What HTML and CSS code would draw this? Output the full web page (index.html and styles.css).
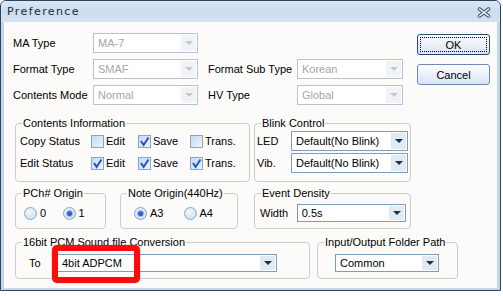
FILE: index.html
```html
<!DOCTYPE html>
<html lang="en">
<head>
<meta charset="UTF-8" />
<title>Preference</title>
<link rel="stylesheet" href="styles.css">
</head>
<body>

<div class="window">
  <div class="titlebar">
    <span class="title">Preference</span>
    <svg class="close" width="14" height="11" viewBox="0 0 14 11">
      <path d="M2.5 2 L11.5 9 M11.5 2 L2.5 9" stroke="#4f6276" stroke-width="3.6" stroke-linecap="round"/>
      <path d="M2.5 2 L11.5 9 M11.5 2 L2.5 9" stroke="#f1f5f9" stroke-width="1.5" stroke-linecap="round"/>
    </svg>
  </div>

  <div class="client">
    <div class="top">
      <div class="fields">
        <span class="lbl c1">MA Type</span>
        <div class="combo off"><span>MA-7</span><i class="arrow"></i></div>

        <span class="lbl c1">Format Type</span>
        <div class="combo off"><span>SMAF</span><i class="arrow"></i></div>
        <span class="lbl l2">Format Sub Type</span>
        <div class="combo off"><span>Korean</span><i class="arrow"></i></div>

        <span class="lbl c1">Contents Mode</span>
        <div class="combo off"><span>Normal</span><i class="arrow"></i></div>
        <span class="lbl l2">HV Type</span>
        <div class="combo off"><span>Global</span><i class="arrow"></i></div>
      </div>
      <div class="buttons">
        <button class="btn default"><span class="face">OK</span></button>
        <button class="btn"><span class="face">Cancel</span></button>
      </div>
    </div>

    <div class="row r2">
      <fieldset class="group g-contents">
        <legend>Contents Information</legend>
        <div class="checks">
          <span>Copy Status</span>
          <label class="chk"><i class="cb"></i>Edit</label>
          <label class="chk"><i class="cb"><svg viewBox="0 0 11 11"><path d="M2 5 L4.6 9 L9.5 1.5"/></svg></i>Save</label>
          <label class="chk"><i class="cb"></i>Trans.</label>

          <span>Edit Status</span>
          <label class="chk"><i class="cb"><svg viewBox="0 0 11 11"><path d="M2 5 L4.6 9 L9.5 1.5"/></svg></i>Edit</label>
          <label class="chk"><i class="cb"><svg viewBox="0 0 11 11"><path d="M2 5 L4.6 9 L9.5 1.5"/></svg></i>Save</label>
          <label class="chk"><i class="cb"><svg viewBox="0 0 11 11"><path d="M2 5 L4.6 9 L9.5 1.5"/></svg></i>Trans.</label>
        </div>
      </fieldset>

      <fieldset class="group g-blink">
        <legend>Blink Control</legend>
        <div class="pairs">
          <span>LED</span>
          <div class="combo"><span>Default(No Blink)</span><i class="arrow"></i></div>
          <span>Vib.</span>
          <div class="combo"><span>Default(No Blink)</span><i class="arrow"></i></div>
        </div>
      </fieldset>
    </div>

    <div class="row r3">
      <fieldset class="group g-pch">
        <legend>PCh# Origin</legend>
        <div class="radios">
          <label class="opt"><i class="rb"></i>0</label>
          <label class="opt"><i class="rb on"></i>1</label>
        </div>
      </fieldset>

      <fieldset class="group g-note">
        <legend>Note Origin(440Hz)</legend>
        <div class="radios">
          <label class="opt"><i class="rb on"></i>A3</label>
          <label class="opt"><i class="rb"></i>A4</label>
        </div>
      </fieldset>

      <fieldset class="group g-event">
        <legend>Event Density</legend>
        <div class="line">
          <span class="tag">Width</span>
          <div class="combo"><span>0.5s</span><i class="arrow"></i></div>
        </div>
      </fieldset>
    </div>

    <div class="row r4">
      <fieldset class="group g-pcm">
        <legend>16bit PCM Sound file Conversion</legend>
        <div class="line">
          <span class="tag">To</span>
          <div class="combo"><span>4bit ADPCM</span><i class="arrow"></i></div>
        </div>
      </fieldset>

      <fieldset class="group g-folder">
        <legend>Input/Output Folder Path</legend>
        <div class="line">
          <div class="combo"><span>Common</span><i class="arrow"></i></div>
        </div>
      </fieldset>
    </div>
  </div>
</div>

<!-- annotation drawn over the screenshot -->
<div class="highlight"></div>

</body>
</html>
```

FILE: styles.css
```css
body {
  margin: 0;
  background: #fff;
  font-family: "Liberation Sans", Arial, sans-serif;
  font-size: 11px;
  color: #000;
  position: relative;
}

.window {
  width: 501px;
  height: 291px;
  box-sizing: border-box;
  border: 1px solid #2a4561;
  border-radius: 6px 6px 0 0;
  background: #c3d6ec;
  display: flex;
  flex-direction: column;
  overflow: hidden;
}

.titlebar {
  height: 21px;
  flex: none;
  display: flex;
  align-items: center;
  justify-content: space-between;
  padding: 0 9px 0 6px;
  background: linear-gradient(#dbe7f4, #cadcef 55%, #d5e3f2);
}
.title {
  font-family: "DejaVu Sans", sans-serif;
  font-size: 11px;
  letter-spacing: 1.4px;
  color: #1f2c3b;
}
.close {
  display: block;
  margin-top: 1px;
}

.client {
  flex: 1;
  margin: 0 3px 2px;
  background: #fcfbf9;
  padding: 11px 0 0 11px;
  box-sizing: border-box;
}

/* top fields */
.top {
  display: flex;
}
.fields {
  margin-left: -2px;
  display: grid;
  grid-template-columns: 80px 105px 99px 106px;
  grid-auto-rows: 20px;
  row-gap: 6px;
  align-items: center;
}
.c1 {
  grid-column: 1;
}
.l2 {
  padding-left: 10px;
}

.buttons {
  margin-left: 14px;
  margin-top: 1px;
  display: flex;
  flex-direction: column;
  gap: 9px;
}
.btn {
  width: 73px;
  height: 21px;
  padding: 2px;
  box-sizing: border-box;
  border: 1px solid #6e8cb3;
  border-radius: 3px;
  background: linear-gradient(#fdfeff, #eaf0f8 50%, #d9e4f2);
  font: inherit;
  color: #000;
  display: flex;
}
.btn .face {
  flex: 1;
  display: flex;
  align-items: center;
  justify-content: center;
  border: 1px dotted transparent;
}
.btn.default {
  border-color: #264a78;
}
.btn.default .face {
  border-color: #000;
}

/* combo boxes */
.combo {
  height: 20px;
  box-sizing: border-box;
  border: 1px solid #7f9db9;
  background: #fff;
  display: flex;
  align-items: center;
  justify-content: space-between;
  padding-left: 4px;
}
.combo .arrow {
  width: 15px;
  align-self: stretch;
  margin: 1px;
  background: #e1e9f4;
  display: flex;
  align-items: center;
  justify-content: center;
}
.combo .arrow::after {
  content: "";
  border-left: 4px solid transparent;
  border-right: 4px solid transparent;
  border-top: 4px solid #1b2f55;
}
.combo.off {
  border-color: #b4c3d6;
  color: #a6a6a6;
}
.combo.off .arrow {
  background: #f1f3f6;
}
.combo.off .arrow::after {
  border-top-color: #c4c9d0;
}

/* group boxes */
.row {
  display: flex;
}
.r2 {
  margin-top: 12px;
  gap: 4px;
}
.r3 {
  margin-top: 5px;
}
.r4 {
  margin-top: 7px;
  gap: 7px;
}
.group {
  margin: 0;
  box-sizing: border-box;
  border: 1px solid #cdcdc4;
  border-radius: 4px;
  padding: 0 4px 7px;
  min-width: 0;
}
.group legend {
  margin-left: 2px;
  padding: 0 1px;
  line-height: 13px;
  font-size: 11px;
  white-space: nowrap;
}

.g-contents {
  width: 235px;
}
.checks {
  display: grid;
  grid-template-columns: 71px 47px 52px auto;
  grid-auto-rows: 22px;
  align-items: center;
}
.chk {
  display: flex;
  align-items: center;
  gap: 2px;
}
.cb {
  width: 13px;
  height: 13px;
  box-sizing: border-box;
  border: 1px solid #87a6cf;
  background: linear-gradient(135deg, #c6d9f1, #eef4fb);
  display: flex;
  align-items: center;
  justify-content: center;
}
.cb svg {
  width: 11px;
  height: 11px;
  fill: none;
  stroke: #2252c6;
  stroke-width: 2;
}

.g-blink {
  width: 157px;
}
.pairs {
  margin-left: -2px;
  display: grid;
  grid-template-columns: 34px 117px;
  grid-auto-rows: 22px;
  align-items: center;
}

.r3 .group {
  padding-bottom: 5px;
}
.r3 .radios,
.r3 .line {
  margin-top: 3px;
}
.g-pch {
  width: 91px;
}
.g-pch .radios {
  padding-left: 4px;
}
.g-note {
  width: 118px;
  margin-left: 14px;
}
.g-note .radios {
  padding-left: 9px;
}
.g-event {
  width: 157px;
  margin-left: 16px;
}
.g-event .line {
  padding-left: 1px;
}

.radios {
  height: 20px;
  display: flex;
  align-items: center;
}
.opt {
  display: flex;
  align-items: center;
  gap: 3px;
  width: 45px;
}
.g-note .opt {
  width: 54px;
}
.rb {
  width: 13px;
  height: 13px;
  box-sizing: border-box;
  border-radius: 50%;
  border: 1px solid #87a6cf;
  background: radial-gradient(circle at 40% 35%, #f5f8fd, #c5d8f0);
  display: flex;
  align-items: center;
  justify-content: center;
}
.rb.on::after {
  content: "";
  width: 5px;
  height: 5px;
  border-radius: 50%;
  background: radial-gradient(circle at 40% 35%, #3a78e0, #143f9a);
  box-shadow: 0 0 0 1px #9dbdec;
}

.line {
  height: 20px;
  display: flex;
  align-items: center;
}
.line .combo {
  height: 18px;
}
.g-event .tag {
  width: 37px;
}
.g-event .combo {
  width: 110px;
}

.r4 .group {
  padding-bottom: 5px;
}
.r4 .line {
  margin-top: 4px;
}
.g-pcm {
  width: 295px;
}
.g-pcm .line {
  padding-left: 9px;
}
.g-pcm .tag {
  width: 27px;
}
.g-pcm .combo {
  width: 221px;
  padding-left: 5px;
}
.g-folder {
  width: 141px;
}
.g-folder .line {
  padding-left: 13px;
}
.g-folder .combo {
  width: 104px;
}

.highlight {
  position: absolute;
  left: 52px;
  top: 245px;
  width: 88px;
  height: 38px;
  box-sizing: border-box;
  border: 6px solid #ff0a0a;
  border-radius: 5px;
  box-shadow: 0 0 1px #ff0a0a;
}
```
